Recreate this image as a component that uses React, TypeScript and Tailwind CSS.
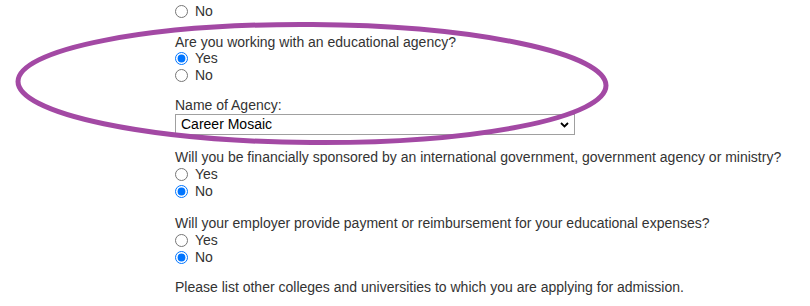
import React from "react";

function Radio({ label, checked, name }: { label: string; checked?: boolean; name: string }) {
  return (
    <label className="flex h-[17px] items-center gap-[7px]">
      <input
        type="radio"
        name={name}
        defaultChecked={checked}
        className="m-0 h-[13px] w-[13px] accent-[#0075ff]"
      />
      <span>{label}</span>
    </label>
  );
}

function Line({ children, h16 }: { children: React.ReactNode; h16?: boolean }) {
  return <div className={h16 ? "flex h-[16px] items-center" : "flex h-[17px] items-center"}>{children}</div>;
}

export default function App() {
  return (
    <div
      className="relative h-[306px] w-[810px] overflow-hidden bg-white text-[14px] text-[#333333]"
      style={{ fontFamily: '"Liberation Sans", Arial, sans-serif' }}
    >
      <div className="flex flex-col pl-[175px] pt-[3px]">
        <Radio name="prev" label="No" />

        <div className="mt-[14px] flex flex-col">
          <Line h16>Are you working with an educational agency?</Line>
          <Radio name="agency" label="Yes" checked />
          <Radio name="agency" label="No" />
        </div>

        <div className="mt-[13px] flex flex-col">
          <Line>Name of Agency:</Line>
          <div className="relative w-[400px]">
            <select
              defaultValue="Career Mosaic"
              className="block h-[21px] w-[400px] appearance-none rounded-none border border-[#a0a0a0] bg-white pl-[5px] text-[14px] leading-[19px] text-black"
            >
              <option>Career Mosaic</option>
            </select>
            <svg
              className="pointer-events-none absolute right-[6px] top-[8px]"
              width="9"
              height="6"
              viewBox="0 0 9 6"
            >
              <path d="M1 1 L4.5 4.5 L8 1" fill="none" stroke="#000" strokeWidth="1.8" />
            </svg>
          </div>
        </div>

        <div className="mt-[14px] flex flex-col">
          <Line>
            Will you be financially sponsored by an international government, government agency or ministry?
          </Line>
          <Radio name="sponsor" label="Yes" />
          <Radio name="sponsor" label="No" checked />
        </div>

        <div className="mt-[15px] flex flex-col">
          <Line>Will your employer provide payment or reimbursement for your educational expenses?</Line>
          <Radio name="employer" label="Yes" />
          <Radio name="employer" label="No" checked />
        </div>

        <div className="mt-[13px] flex flex-col">
          <Line>Please list other colleges and universities to which you are applying for admission.</Line>
        </div>
      </div>

      <svg
        className="pointer-events-none absolute left-0 top-0"
        width="810"
        height="306"
        viewBox="0 0 810 306"
      >
        <ellipse
          cx="312"
          cy="83.5"
          rx="294"
          ry="59"
          fill="none"
          stroke="#a349a4"
          strokeWidth="5"
          transform="rotate(0.4 312 83.5)"
        />
      </svg>
    </div>
  );
}
